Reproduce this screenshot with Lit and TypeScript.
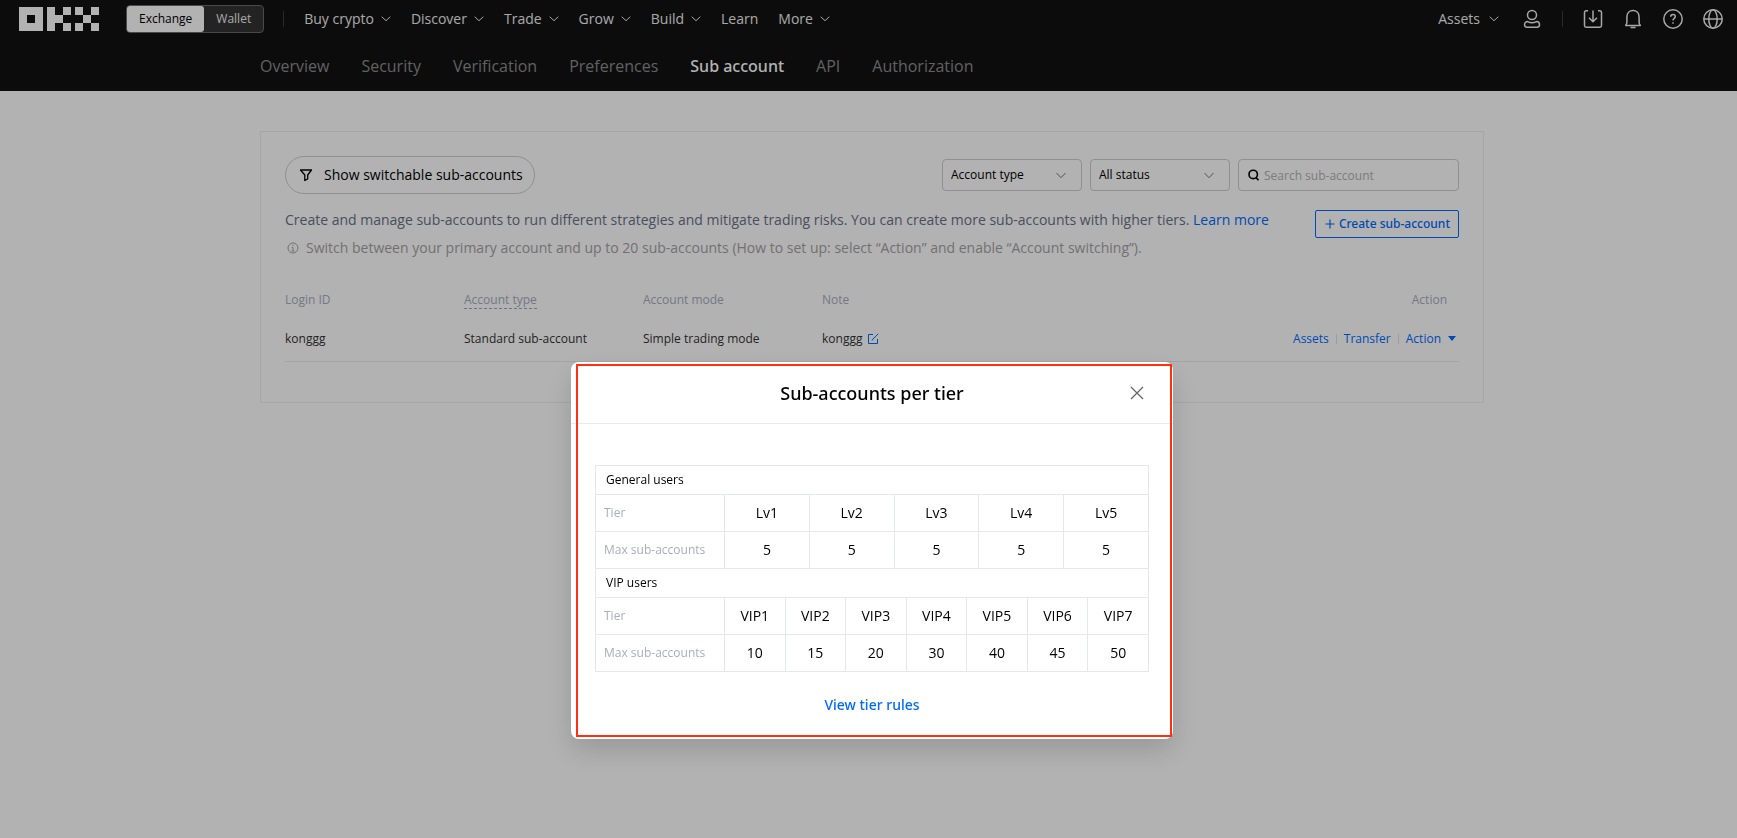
import { LitElement, html, css, svg } from "lit";
import { customElement, property } from "lit/decorators.js";
import { classMap } from "lit/directives/class-map.js";

const chevron = html`<svg class="chevron" viewBox="0 0 10 6" width="10" height="6" aria-hidden="true">
  <path d="M1 1l4 3.700 4-3.700" fill="none" stroke="currentColor" stroke-width="1" stroke-linecap="round" stroke-linejoin="round"/>
</svg>`;

const shared = css`
  * { box-sizing: border-box; }
  a { color: inherit; text-decoration: none; }
  button { font: inherit; color: inherit; background: none; border: 0; padding: 0; cursor: pointer; }
  svg { display: block; flex: none; }
  .medium { font-family: "Noto Sans", sans-serif; font-weight: 500; }
`;

@customElement("site-header")
export class SiteHeader extends LitElement {
  static styles = [shared, css`
    :host { display: block; background: #121212; color: #f0f0f0; }
    .top { display: flex; align-items: center; height: 38px; padding: 0 14px 0 19px; font-size: 14px; line-height: 20px; }
    .logo { margin-right: 27px; color: #fff; }
    .toggle { display: flex; height: 28px; border: 1px solid #6b6b6b; border-radius: 4px; background: #333; font-size: 12px; }
    .toggle button { padding: 0 12px; border-radius: 3px; }
    .toggle .on { background: #fff; color: #000; }
    .rule { width: 1px; height: 16px; background: #3d3d3d; }
    .top .rule { margin-left: 19px; }
    .menu { display: flex; gap: 20px; margin-left: 20px; }
    .item { display: flex; align-items: center; gap: 7px; }
    .tools { display: flex; align-items: center; margin-left: auto; }
    .tools .item { gap: 9px; margin-right: 23px; }
    .tools .rule { margin: 0 20px; }
    .icons { display: flex; gap: 20px; }
    .tabs { display: flex; gap: 32px; height: 53px; padding: 16px 0 0 260px; font-size: 16px; line-height: 24px; color: #8c8c8c; }
    .tabs .current { color: #fff; }
  `];

  private menu: [string, boolean][] = [
    ["Buy crypto", true], ["Discover", true], ["Trade", true], ["Grow", true],
    ["Build", true], ["Learn", false], ["More", true],
  ];
  private tabs = ["Overview", "Security", "Verification", "Preferences", "Sub account", "API", "Authorization"];

  render() {
    return html`
      <div class="top">
        <a class="logo" href="#" aria-label="OKX">
          <svg width="80" height="24" viewBox="0 0 80 24" fill="currentColor" shape-rendering="crispEdges">
            <path fill-rule="evenodd" d="M0 0h24v24H0zM8 8v8h8V8z"/>
            <path d="M28 0h8v8h8v8h-8v8h-8zM44 0h8v8h-8zM44 16h8v8h-8zM56 0h8v8h-8zM72 0h8v8h-8zM64 8h8v8h-8zM56 16h8v8h-8zM72 16h8v8h-8z"/>
          </svg>
        </a>
        <div class="toggle">
          <button class="on">Exchange</button>
          <button>Wallet</button>
        </div>
        <span class="rule"></span>
        <nav class="menu" aria-label="Main">
          ${this.menu.map(([label, more]) => html`<a class="item" href="#">${label}${more ? chevron : null}</a>`)}
        </nav>
        <div class="tools">
          <a class="item" href="#">Assets ${chevron}</a>
          <button aria-label="Account">${this.icon(svg`
            <circle cx="10" cy="6" r="4.5"/>
            <path d="M5.5 12.6C7 13.3 8.500 13.700 10 13.700s3-.4 4.500-1.100c1.600 0 3 1.400 3 3.200 0 1.500-1 2.400-2.500 2.400H5c-1.500 0-2.500-.9-2.500-2.400 0-1.800 1.400-3.200 3-3.200z"/>`)}</button>
          <span class="rule"></span>
          <div class="icons">
            <button aria-label="Download app">${this.icon(svg`
              <path d="M5 1.700H3.200c-1 0-1.700.7-1.700 1.700v13.200c0 1 .7 1.700 1.700 1.700h13.600c1 0 1.700-.7 1.700-1.700V3.400c0-1-.7-1.700-1.700-1.700H15M10 1.500v11M6 8.700l4 4 4-4"/>`)}</button>
            <button aria-label="Notifications">${this.icon(svg`
              <path d="M2.700 16.400c1-1 1.200-2 1.200-3.400V8c0-3.700 2.500-6.500 6.100-6.500S16.100 4.300 16.100 8v5c0 1.400.2 2.400 1.200 3.400zM7.500 18.500h5"/>`)}</button>
            <button aria-label="Help">${this.icon(svg`
              <circle cx="10" cy="10" r="9.200"/>
              <path d="M7.700 7.800c0-1.500 1-2.400 2.300-2.400s2.300.8 2.300 2.200c0 1.800-2.300 1.900-2.300 4M10 13.300v1.500"/>`)}</button>
            <button aria-label="Language">${this.icon(svg`
              <circle cx="10" cy="10" r="9.200"/>
              <ellipse cx="10" cy="10" rx="4.200" ry="9.200"/>
              <path d="M.8 10h18.400"/>`)}</button>
          </div>
        </div>
      </div>
      <nav class="tabs" aria-label="Account">
        ${this.tabs.map(t => html`<a href="#" class=${classMap({ current: t === "Sub account", medium: t === "Sub account" })}>${t}</a>`)}
      </nav>`;
  }

  private icon(shape: unknown) {
    return html`<svg width="20" height="20" viewBox="0 0 20 20" fill="none" stroke="currentColor" stroke-width="1.500" stroke-linejoin="round">${shape}</svg>`;
  }
}

@customElement("sub-accounts")
export class SubAccounts extends LitElement {
  static styles = [shared, css`
    :host { display: block; max-width: 1224px; margin: 40px auto 0; padding: 24px 24px 40px; border: 1px solid #ebeef4; color: #333; font-size: 12px; line-height: 18px; }
    .filters { display: flex; align-items: center; gap: 8px; }
    .switchable { display: flex; align-items: center; gap: 11px; height: 38px; padding: 0 11px 0 13px; margin-right: auto; border: 1px solid #cfcfcf; border-radius: 19px; color: #000; font-size: 14px; }
    .field { display: flex; align-items: center; height: 32px; border: 1px solid #cfcfcf; border-radius: 4px; color: #000; }
    .select { display: grid; width: 140px; align-items: center; }
    .select > * { grid-area: 1 / 1; }
    .select svg { justify-self: end; margin-right: 14px; color: #777; pointer-events: none; }
    select, input { width: 100%; height: 30px; padding: 0 8px; border: 0; outline: 0; background: none; appearance: none; font: inherit; color: inherit; }
    .search { width: 221px; padding-left: 9px; }
    .search input { padding: 0 5px; }
    input::placeholder { color: #b3b3b3; opacity: 1; }
    .intro { display: flex; justify-content: space-between; align-items: flex-start; margin-top: 15px; font-size: 14px; line-height: 22px; color: #6a7188; }
    p { margin: 0; }
    .hint { display: flex; align-items: center; gap: 7px; margin-top: 6px; padding-left: 2px; color: #a3a3a3; }
    .blue { color: #006bff; }
    .create { display: flex; align-items: center; gap: 4px; height: 28px; margin-top: 1px; padding: 0 8px 0 9px; border: 1px solid #006bff; border-radius: 2px; font-size: 12px; color: #006bff; }
    table { width: 100%; margin-top: 23px; border-collapse: collapse; table-layout: fixed; }
    th, td { padding: 0; text-align: left; font-weight: 400; }
    th { height: 35px; color: #a7adbf; }
    td { height: 44px; border-bottom: 1px solid #e9ebf0; }
    .col { width: 179px; }
    th.last { padding-right: 12px; text-align: right; }
    .dashed { border-bottom: 1px dashed #a0a5b5; }
    .note, .actions { display: flex; align-items: center; }
    .note { gap: 5px; }
    .actions { justify-content: flex-end; color: #006bff; }
    .actions a + a, .actions button { margin-left: 7px; padding-left: 8px; background: linear-gradient(#dfe2ec, #dfe2ec) 0 50% / 1px 10px no-repeat; }
    .actions button { display: flex; align-items: center; gap: 7px; padding-right: 3px; }
  `];

  render() {
    const down = html`<svg width="12" height="7" viewBox="0 0 12 7"><path d="M1.500 1L6 5.700 10.500 1" fill="none" stroke="currentColor" stroke-width="1"/></svg>`;
    return html`
      <div class="filters">
        <button class="switchable">
          <svg width="14" height="14" viewBox="0 0 14 14" fill="none" stroke="currentColor" stroke-width="1.300" stroke-linejoin="round"><path d="M1.500 2h11L8.700 7v4L5.800 12.500V7z"/></svg>
          Show switchable sub-accounts
        </button>
        <div class="field select">
          <select aria-label="Account type"><option>Account type</option></select>${down}
        </div>
        <div class="field select">
          <select aria-label="Status"><option>All status</option></select>${down}
        </div>
        <label class="field search">
          <svg width="11" height="12" viewBox="0 0 11 12" fill="none" stroke="currentColor" stroke-width="1.600"><circle cx="5.200" cy="5.400" r="4.200"/><path d="M8 8.500l2.500 2.700"/></svg>
          <input type="text" placeholder="Search sub-account" aria-label="Search sub-account">
        </label>
      </div>
      <div class="intro">
        <div>
          <p>Create and manage sub-accounts to run different strategies and mitigate trading risks. You can create more sub-accounts with higher tiers. <a class="blue" href="#">Learn more</a></p>
          <p class="hint">
            <svg width="12" height="12" viewBox="0 0 12 12" fill="none" stroke="currentColor"><circle cx="6" cy="6" r="5"/><path d="M6 2.800v1.200M4.800 5.500H6V9M4.600 9h2.800"/></svg>
            Switch between your primary account and up to 20 sub-accounts (How to set up: select “Action” and enable “Account switching”).
          </p>
        </div>
        <button class="create medium">
          <svg width="10" height="10" viewBox="0 0 10 10" stroke="currentColor" stroke-width="1.200"><path d="M5 .5v9M.5 5h9"/></svg>
          Create sub-account
        </button>
      </div>
      <table>
        <thead>
          <tr>
            <th class="col">Login ID</th>
            <th class="col"><span class="dashed">Account type</span></th>
            <th class="col">Account mode</th>
            <th class="col">Note</th>
            <th class="last">Action</th>
          </tr>
        </thead>
        <tbody>
          <tr>
            <td>konggg</td>
            <td>Standard sub-account</td>
            <td>Simple trading mode</td>
            <td>
              <div class="note">konggg
                <button class="blue" aria-label="Edit note">
                  <svg width="12" height="12" viewBox="0 0 12 12" fill="none" stroke="currentColor"><path d="M6 1.500H1.500v9h9V6M5 7.500l1-1.500L11.200.8"/></svg>
                </button>
              </div>
            </td>
            <td>
              <div class="actions">
                <a href="#">Assets</a><a href="#">Transfer</a>
                <button>Action <svg width="8" height="5" viewBox="0 0 8 5" fill="currentColor"><path d="M0 0h8L4 5z"/></svg></button>
              </div>
            </td>
          </tr>
        </tbody>
      </table>`;
  }
}

interface TierGroup { title: string; span: number; tiers: [string, number][]; }

@customElement("tier-dialog")
export class TierDialog extends LitElement {
  static styles = [shared, css`
    :host { display: block; position: relative; width: 602px; max-width: 100%; padding-bottom: 24px; border-radius: 8px; background: #fff; color: #000; box-shadow: 0 12px 28px rgba(0, 0, 0, 0.15); text-align: center; }
    .outline { position: absolute; inset: 2px 1px 2px 5px; border: 2px solid #ff2f0f; pointer-events: none; }
    header { display: grid; align-items: center; height: 62px; border-bottom: 1px solid #ebebeb; }
    header > * { grid-area: 1 / 1; }
    h2 { margin: 0; font-size: 18px; line-height: 26px; }
    header button { justify-self: end; margin-right: 29px; color: #666; }
    .body { padding: 41px 24px 0; }
    table { width: 100%; border-collapse: collapse; table-layout: fixed; border: 1px solid #e4e7ee; font-size: 14px; line-height: 18px; }
    th, td { height: 37px; padding: 0; border: 1px solid #e4e7ee; font-weight: 400; }
    th { padding-left: 8px; text-align: left; font-size: 12px; color: #a7adbf; }
    th.group { height: 29px; padding-left: 10px; color: #000; }
    .label { width: 129px; }
    .link { display: inline-block; margin-top: 23px; font-size: 14px; line-height: 20px; color: #006bff; }
  `];

  @property({ attribute: false }) groups: TierGroup[] = [
    { title: "General users", span: 7, tiers: [["Lv1", 5], ["Lv2", 5], ["Lv3", 5], ["Lv4", 5], ["Lv5", 5]] },
    { title: "VIP users", span: 5, tiers: [["VIP1", 10], ["VIP2", 15], ["VIP3", 20], ["VIP4", 30], ["VIP5", 40], ["VIP6", 45], ["VIP7", 50]] },
  ];

  render() {
    return html`
      <header>
        <h2 class="medium">Sub-accounts per tier</h2>
        <button aria-label="Close">
          <svg width="14" height="14" viewBox="0 0 14 14" stroke="currentColor" stroke-width="1.300"><path d="M1 1l12 12M13 1L1 13"/></svg>
        </button>
      </header>
      <div class="body">
        <table>
          <colgroup><col class="label"><col span="35"></colgroup>
          ${this.groups.map(g => html`
            <tbody>
              <tr><th class="group" colspan="36">${g.title}</th></tr>
              <tr><th>Tier</th>${g.tiers.map(([name]) => html`<td colspan=${g.span}>${name}</td>`)}</tr>
              <tr><th>Max sub-accounts</th>${g.tiers.map(([, max]) => html`<td colspan=${g.span}>${max}</td>`)}</tr>
            </tbody>`)}
        </table>
        <a class="link medium" href="#">View tier rules</a>
      </div>
      <div class="outline"></div>`;
  }
}

@customElement("app-root")
export class AppRoot extends LitElement {
  static styles = [shared, css`
    :host { display: block; min-height: 100vh; background: #fff; font-family: "Open Sans", sans-serif; }
    main { padding-left: 7px; }
    .overlay { position: fixed; inset: 0; display: flex; justify-content: center; align-items: flex-start; padding: 362px 0 0 7px; background: rgba(0, 0, 0, 0.3); }
  `];

  render() {
    return html`
      <site-header></site-header>
      <main><sub-accounts></sub-accounts></main>
      <div class="overlay">
        <tier-dialog role="dialog" aria-modal="true" aria-label="Sub-accounts per tier"></tier-dialog>
      </div>`;
  }
}
